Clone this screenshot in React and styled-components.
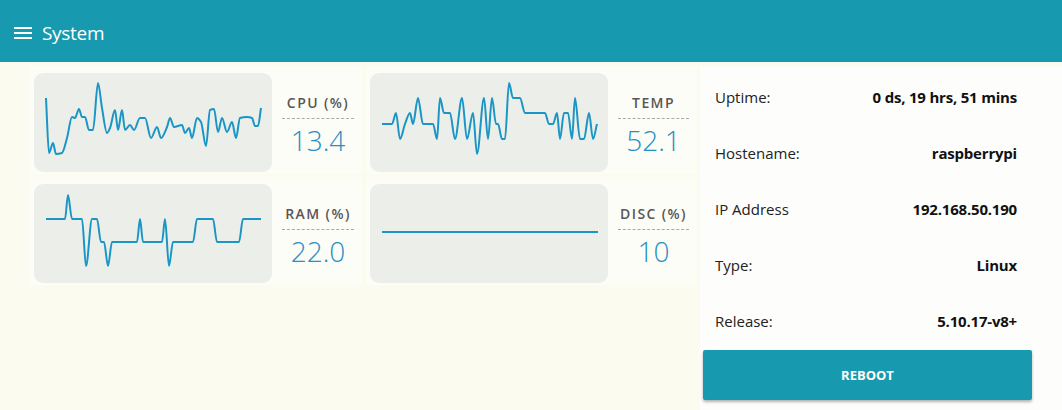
import React from 'react';
import styled, { createGlobalStyle } from 'styled-components';

const GlobalStyle = createGlobalStyle`
  body {
    margin: 0;
    padding: 0;
    background: #fbfbef;
    font-family: 'Open Sans', 'Noto Sans', sans-serif;
  }
`;

const STATS = [
  {
    title: 'CPU (%)',
    value: '13.4',
    points: [
      [12, 25], [15, 80], [19, 70], [22, 81], [28, 80], [33, 65], [38, 44], [41, 45], [45, 36],
      [48, 44], [51, 44], [55, 57], [59, 57], [64, 10], [68, 35], [73, 60], [76, 55], [81, 37],
      [84, 57], [88, 37], [91, 57], [96, 52], [100, 57], [106, 45], [111, 45], [117, 65], [123, 54],
      [127, 65], [133, 54], [136, 45], [140, 54], [148, 52], [151, 60], [155, 55], [158, 65],
      [163, 45], [167, 49], [172, 73], [176, 37], [180, 36], [184, 59], [188, 45], [193, 59],
      [198, 49], [202, 65], [206, 45], [213, 44], [218, 45], [221, 53], [224, 53], [227, 35],
    ],
  },
  {
    title: 'TEMP',
    value: '52.1',
    points: [
      [12, 51], [22, 51], [26, 40], [30, 66], [35, 51], [40, 40], [43, 51], [48, 25], [53, 51],
      [63, 51], [67, 66], [70, 25], [74, 40], [80, 40], [85, 66], [92, 25], [97, 66], [103, 40],
      [107, 81], [114, 25], [118, 66], [122, 25], [126, 51], [128, 51], [132, 66], [135, 66],
      [139, 10], [143, 25], [150, 25], [155, 40], [175, 40], [179, 51], [183, 51], [187, 40],
      [190, 66], [194, 40], [198, 40], [202, 66], [205, 25], [210, 66], [214, 66], [219, 40],
      [223, 66], [227, 51],
    ],
  },
  {
    title: 'RAM (%)',
    value: '22.0',
    points: [
      [12, 35], [31, 35], [34, 11], [38, 35], [48, 35], [52, 82], [58, 35], [63, 35], [67, 58],
      [70, 58], [74, 82], [78, 58], [103, 58], [106, 35], [109, 58], [128, 58], [131, 35],
      [135, 82], [139, 58], [159, 58], [163, 35], [179, 35], [183, 58], [205, 58], [209, 35],
      [227, 35],
    ],
  },
  {
    title: 'DISC (%)',
    value: '10',
    points: [[12, 48], [120, 48], [228, 48]],
  },
];

const INFO = [
  ['Uptime:', '0 ds, 19 hrs, 51 mins'],
  ['Hostename:', 'raspberrypi'],
  ['IP Address', '192.168.50.190'],
  ['Type:', 'Linux'],
  ['Release:', '5.10.17-v8+'],
];

// monotone cubic interpolation, keeps flat runs flat
function monotonePath(pts) {
  const n = pts.length;
  if (n < 3) return 'M' + pts.map((p) => p.join(',')).join('L');
  const dx = [], m = [], t = [];
  for (let i = 0; i < n - 1; i++) {
    dx[i] = pts[i + 1][0] - pts[i][0];
    m[i] = (pts[i + 1][1] - pts[i][1]) / dx[i];
  }
  t[0] = m[0];
  t[n - 1] = m[n - 2];
  for (let i = 1; i < n - 1; i++) {
    if (m[i - 1] * m[i] <= 0) t[i] = 0;
    else {
      const h0 = dx[i - 1], h1 = dx[i];
      t[i] = (3 * (h0 + h1)) / ((2 * h1 + h0) / m[i - 1] + (h1 + 2 * h0) / m[i]);
    }
  }
  let d = `M${pts[0][0]},${pts[0][1]}`;
  for (let i = 0; i < n - 1; i++) {
    const [x0, y0] = pts[i];
    const [x1, y1] = pts[i + 1];
    const h = dx[i] / 3;
    d += `C${x0 + h},${y0 + t[i] * h} ${x1 - h},${y1 - t[i + 1] * h} ${x1},${y1}`;
  }
  return d;
}

const Header = styled.header`
  height: 62px;
  box-sizing: border-box;
  padding: 4px 0 0 13px;
  background: #179aaf;
  display: flex;
  align-items: center;
  gap: 9px;
  color: #fff;
`;

const Title = styled.h1`
  margin: 0;
  font-size: 19px;
  font-weight: 400;
  letter-spacing: -0.3px;
`;

const Main = styled.main`
  display: flex;
  align-items: flex-start;
  padding-top: 4px;
`;

const StatsGrid = styled.div`
  margin-left: 30px;
  width: 667px;
  display: grid;
  grid-template-columns: 332px 331px;
  column-gap: 4px;
  row-gap: 3px;
`;

const Cell = styled.div`
  background: #fdfdf8;
  height: 108px;
  padding: 7px 4px 0;
  box-sizing: border-box;
  display: flex;
`;

const ChartBox = styled.div`
  width: 238px;
  height: 99px;
  flex: none;
  background: #ecefe9;
  border-radius: 9px;
`;

const Readout = styled.div`
  flex: 1;
  display: flex;
  flex-direction: column;
  justify-content: center;
  align-items: stretch;
  padding: 2px 4px 0 10px;
  text-align: center;
`;

const ReadoutTitle = styled.div`
  font-size: 14px;
  font-weight: 600;
  letter-spacing: 1.4px;
  color: #5a5656;
  line-height: 19px;
  padding-bottom: 6px;
  border-bottom: 1px dashed #a9a9a9;
`;

const ReadoutValue = styled.div`
  font-size: 28px;
  font-weight: 300;
  color: #2690c2;
  line-height: 34px;
  padding-top: 4px;
`;

const InfoPanel = styled.aside`
  margin-left: 3px;
  flex: 1;
  height: 344px;
  background: #fdfdfc;
  padding-top: 3px;
  box-sizing: border-box;
`;

const InfoRow = styled.div`
  height: 56px;
  display: flex;
  align-items: center;
  justify-content: space-between;
  padding: 0 45px 0 15px;
  font-size: 15px;
  color: #222;
`;

const InfoValue = styled.span`
  font-weight: 700;
  color: #111;
  letter-spacing: -0.2px;
`;

const RebootButton = styled.button`
  display: block;
  margin: 1px 0 0 3px;
  width: 329px;
  height: 50px;
  border: none;
  border-radius: 2px;
  background: #179aaf;
  color: #fff;
  font-family: inherit;
  font-size: 13px;
  font-weight: 700;
  box-shadow: 0 2px 3px rgba(0, 0, 0, 0.3);
  cursor: pointer;
`;

function MenuIcon() {
  return (
    <svg width="20" height="20" viewBox="0 0 20 20">
      <path d="M1 5h18M1 10h18M1 15h18" stroke="#fff" strokeWidth="2" />
    </svg>
  );
}

function Sparkline({ points }) {
  return (
    <svg width="238" height="99" viewBox="0 0 238 99">
      <path d={monotonePath(points)} fill="none" stroke="#1a95c6" strokeWidth="2" strokeLinejoin="round" />
    </svg>
  );
}

export default function App() {
  return (
    <>
      <GlobalStyle />
      <Header>
        <MenuIcon />
        <Title>System</Title>
      </Header>
      <Main>
        <StatsGrid>
          {STATS.map((s) => (
            <Cell key={s.title}>
              <ChartBox>
                <Sparkline points={s.points} />
              </ChartBox>
              <Readout>
                <ReadoutTitle>{s.title}</ReadoutTitle>
                <ReadoutValue>{s.value}</ReadoutValue>
              </Readout>
            </Cell>
          ))}
        </StatsGrid>
        <InfoPanel>
          {INFO.map(([label, value]) => (
            <InfoRow key={label}>
              <span>{label}</span>
              <InfoValue>{value}</InfoValue>
            </InfoRow>
          ))}
          <RebootButton>REBOOT</RebootButton>
        </InfoPanel>
      </Main>
    </>
  );
}
